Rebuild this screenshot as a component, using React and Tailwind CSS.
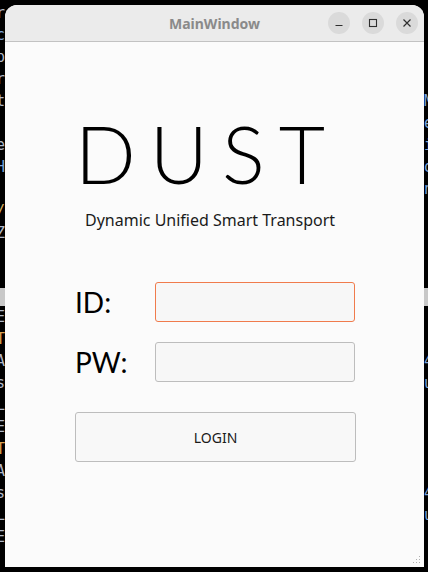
import React from 'react'

const LEFT = [
  ['r', 'text-[#b0b8c8]'], ['c', 'text-[#7aa2d8]'], ['p', 'text-[#b0b8c8]'], ['r', 'text-[#b0b8c8]'],
  ['t', 'text-[#b0b8c8]'], ['', ''], ['e', 'text-[#b0b8c8]'], ['H', 'text-[#7aa2d8]'], ['', ''],
  ['/', 'text-[#d8b060]'], ['Z', 'text-[#b0b8c8]'], ['', ''], ['', ''],
]
const LEFT2 = [
  ['E', 'text-[#b0b8c8]'], ['T', 'text-[#d8a050]'], ['A', 'text-[#b0b8c8]'], ['s', 'text-[#b0b8c8]'],
  ['L', 'text-[#b0b8c8]'], ['E', 'text-[#b0b8c8]'], ['T', 'text-[#d8a050]'], ['A', 'text-[#b0b8c8]'],
  ['s', 'text-[#b0b8c8]'], ['L', 'text-[#b0b8c8]'], ['E', 'text-[#b0b8c8]'],
]

function Backdrop() {
  return (
    <div className="flex flex-col pt-[2px] font-['DejaVu_Sans_Mono',monospace] text-[15px] leading-[22px]">
      {LEFT.map(([c, col], i) => (
        <div key={i} className="h-[22px] flex justify-between">
          <span className={`-ml-[4px] ${col}`}>{c}</span>
          <span className="w-[4px] overflow-hidden text-[#7aa2d8]">{[4, 5, 6, 7, 8].includes(i) ? 'Meion'[i - 4] : ''}</span>
        </div>
      ))}
      <div className="h-[18px] bg-[#c8c8c8]" />
      {LEFT2.map(([c, col], i) => (
        <div key={i} className="h-[22px] flex justify-between">
          <span className={`-ml-[4px] ${col}`}>{c}</span>
          <span className="w-[4px] overflow-hidden text-[#7aa2d8]">{i === 2 || i === 8 ? '4' : i === 3 || i === 9 ? 'u' : ''}</span>
        </div>
      ))}
    </div>
  )
}

function TitleButton({ children }) {
  return (
    <div className="w-[22px] h-[22px] rounded-full bg-[#dadada] flex items-center justify-center text-[#2e2e2e]">
      {children}
    </div>
  )
}

export default function App() {
  return (
    <div className="relative w-[428px] h-[572px] bg-black overflow-hidden">
      <Backdrop />

      {/* the application window */}
      <div className="absolute left-[5px] top-[5px] w-[419px] h-[562px] rounded-t-[12px] overflow-hidden bg-[#fbfbfb] flex flex-col">
        <div className="relative h-[37px] shrink-0 bg-[#ebebeb] border-b border-[#c2c2c2] flex items-center justify-center">
          <span className="font-['Noto_Sans',sans-serif] font-bold text-[14px] text-[#8a8a8a]">MainWindow</span>
          <div className="absolute right-[6px] top-[7px] flex gap-[12px]">
            <TitleButton>
              <svg width="10" height="10" viewBox="0 0 10 10"><path d="M1.5 7.5h7" stroke="currentColor" strokeWidth="1.2" /></svg>
            </TitleButton>
            <TitleButton>
              <svg width="10" height="10" viewBox="0 0 10 10"><rect x="1.5" y="1.5" width="7" height="7" fill="none" stroke="currentColor" strokeWidth="1.1" /></svg>
            </TitleButton>
            <TitleButton>
              <svg width="10" height="10" viewBox="0 0 10 10"><path d="M1.5 1.5l7 7M8.5 1.5l-7 7" stroke="currentColor" strokeWidth="1.2" /></svg>
            </TitleButton>
          </div>
        </div>

        <div className="relative flex-1 flex flex-col pl-[70px] font-['Lato',sans-serif] text-black">
          <div className="mt-[71px] font-light text-[80px] leading-none tracking-[14px]">DUST</div>
          <div className="mt-[17px] ml-[10px] font-['Noto_Sans',sans-serif] text-[16px] leading-[20px] text-[#1a1a1a]">
            Dynamic Unified Smart Transport
          </div>

          <div className="mt-[52px] flex items-center">
            <label className="w-[80px] text-[28px] leading-none">ID:</label>
            <div className="w-[200px] h-[40px] rounded-[3px] border border-[#f07b4c] bg-[#f7f7f7]" />
          </div>
          <div className="mt-[20px] flex items-center">
            <label className="w-[80px] text-[28px] leading-none">PW:</label>
            <div className="w-[200px] h-[40px] rounded-[3px] border border-[#bdbdbd] bg-[#f7f7f7]" />
          </div>

          <button className="mt-[30px] w-[281px] h-[50px] rounded-[3px] border border-[#bdbdbd] bg-[#f8f8f8] font-['Noto_Sans',sans-serif] text-[14px] text-[#1a1a1a]">
            LOGIN
          </button>

          <div className="absolute right-[4px] bottom-[4px] grid grid-cols-3 gap-[2px]">
            {[0, 0, 1, 0, 1, 1, 1, 1, 1].map((v, i) => (
              <span key={i} className={`w-[1px] h-[1px] ${v ? 'bg-[#b0b0b0]' : ''}`} />
            ))}
          </div>
        </div>
      </div>
    </div>
  )
}
